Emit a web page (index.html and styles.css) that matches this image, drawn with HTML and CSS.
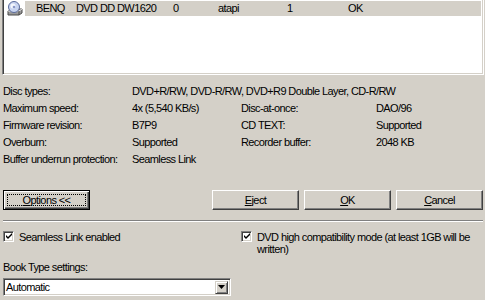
FILE: index.html
```html
<!DOCTYPE html>
<html>
<head>
<meta charset="utf-8">
<link rel="stylesheet" href="styles.css">
</head>
<body>
<div class="dialog">
  <div class="list">
    <div class="row">
      <svg class="drive" width="16" height="16" viewBox="0 0 16 16">
        <path d="M1 10 L4 8 H15 V12 L12 14 H1 Z" fill="#9a9a9a" stroke="#4a4a4a" stroke-width="1"/>
        <path d="M1 10 H12 L15 8" fill="none" stroke="#e8e8e8" stroke-width="1"/>
        <path d="M12 10 V14" stroke="#4a4a4a" stroke-width="1"/>
        <circle cx="7" cy="6" r="5.5" fill="#c8d4f0" stroke="#5a6a9a" stroke-width="1"/>
        <circle cx="6" cy="5" r="2.5" fill="#ffffff" opacity="0.8"/>
        <circle cx="7" cy="6" r="1.3" fill="#8a98c8"/>
      </svg>
      <div class="cells">
        <span>BENQ</span>
        <span>DVD DD DW1620</span>
        <span>0</span>
        <span>atapi</span>
        <span>1</span>
        <span>OK</span>
      </div>
    </div>
  </div>

  <div class="info">
    <span>Disc types:</span>
    <span class="wide">DVD+R/RW, DVD-R/RW, DVD+R9 Double Layer, CD-R/RW</span>
    <span>Maximum speed:</span>
    <span>4x (5,540 KB/s)</span>
    <span>Disc-at-once:</span>
    <span>DAO/96</span>
    <span>Firmware revision:</span>
    <span>B7P9</span>
    <span>CD TEXT:</span>
    <span>Supported</span>
    <span>Overburn:</span>
    <span>Supported</span>
    <span>Recorder buffer:</span>
    <span>2048 KB</span>
    <span>Buffer underrun protection:</span>
    <span class="wide">Seamless Link</span>
  </div>

  <div class="buttons">
    <button class="btn default"><span class="focus"><u>O</u>ptions &lt;&lt;</span></button>
    <div class="right-buttons">
      <button class="btn"><u>E</u>ject</button>
      <button class="btn"><u>O</u>K</button>
      <button class="btn"><u>C</u>ancel</button>
    </div>
  </div>

  <div class="separator"></div>

  <div class="options">
    <div class="col">
      <label class="check">
        <span class="box"><svg width="7" height="7" viewBox="0 0 7 7"><path d="M0 2 L2 4 L6 0 V2 L2 6 L0 4 Z" fill="#000"/></svg></span>
        <span class="label">Seamless Link enabled</span>
      </label>
      <div class="book-label">Book Type settings:</div>
      <div class="select">
        <span class="value">Automatic</span>
        <span class="arrow"><svg width="7" height="4" viewBox="0 0 7 4"><path d="M0 0 H7 L3.5 4 Z" fill="#000"/></svg></span>
      </div>
    </div>
    <div class="col">
      <label class="check">
        <span class="box"><svg width="7" height="7" viewBox="0 0 7 7"><path d="M0 2 L2 4 L6 0 V2 L2 6 L0 4 Z" fill="#000"/></svg></span>
        <span class="label">DVD high compatibility mode (at least 1GB will be written)</span>
      </label>
    </div>
  </div>
</div>
</body>
</html>
```

FILE: styles.css
```css
html, body {
  margin: 0;
  padding: 0;
  background: #d4d0c8;
}
body {
  width: 485px;
  height: 300px;
  overflow: hidden;
  font-family: "Liberation Sans", Arial, sans-serif;
  font-size: 11px;
  letter-spacing: -0.6px;
  color: #000;
}
.dialog {
  display: flex;
  flex-direction: column;
}
.list {
  margin: -2px 1px 0 2px;
  height: 73px;
  background: #fff;
  border-style: solid;
  border-width: 1px;
  border-color: #808080 #fff #fff #808080;
  box-shadow: inset 1px 1px 0 #404040, inset -1px -1px 0 #d4d0c8;
  padding: 2px 2px 0 2px;
}
.row {
  display: flex;
  align-items: center;
  height: 15px;
}
.drive {
  margin-left: 2px;
  flex: none;
}
.cells {
  flex: 1;
  height: 15px;
  margin-left: 2px;
  background: #d4d0c8;
  display: grid;
  grid-template-columns: 40px 97px 45px 69px 61px 1fr;
  align-items: center;
  padding-left: 11px;
  line-height: 15px;
}
.info {
  margin-top: 7px;
  padding-left: 3px;
  display: grid;
  grid-template-columns: 129px 109px 135px 1fr;
  grid-auto-rows: 17px;
  align-items: center;
}
.info .wide {
  grid-column: span 3;
}
.buttons {
  margin-top: 23px;
  display: flex;
  justify-content: space-between;
  padding: 0 2px 0 3px;
}
.right-buttons {
  display: flex;
  gap: 5px;
}
.btn {
  width: 87px;
  height: 20px;
  padding: 0;
  margin: 0;
  font: inherit;
  letter-spacing: inherit;
  color: #000;
  background: #d4d0c8;
  border-style: solid;
  border-width: 1px;
  border-color: #fff #404040 #404040 #fff;
  box-shadow: inset -1px -1px 0 #808080;
  display: flex;
  align-items: center;
  justify-content: center;
}
.btn.default {
  border: 1px solid #000;
  box-shadow: inset 1px 1px 0 #fff, inset -1px -1px 0 #404040, inset -2px -2px 0 #808080;
}
.btn .focus {
  flex: 1;
  align-self: stretch;
  margin: 3px;
  border: 1px dotted #000;
  display: flex;
  align-items: center;
  justify-content: center;
}
.separator {
  margin: 10px 2px 0 3px;
  border-top: 1px solid #808080;
  border-bottom: 1px solid #fff;
  height: 0;
}
.options {
  margin-top: 9px;
  padding-left: 3px;
  display: grid;
  grid-template-columns: 238px 1fr;
}
.col {
  display: flex;
  flex-direction: column;
}
.check {
  display: flex;
  align-items: flex-start;
  line-height: 12px;
}
.box {
  flex: none;
  width: 9px;
  height: 9px;
  background: #fff;
  border-style: solid;
  border-width: 1px;
  border-color: #808080 #fff #fff #808080;
  box-shadow: inset 1px 1px 0 #404040, inset -1px -1px 0 #d4d0c8;
  display: flex;
  align-items: center;
  justify-content: center;
}
.box svg {
  margin-left: 1px;
}
.check .label {
  margin-left: 5px;
  padding-right: 10px;
}
.book-label {
  margin-top: 17px;
  line-height: 14px;
}
.select {
  margin-top: 4px;
  width: 222px;
  height: 14px;
  background: #fff;
  border-style: solid;
  border-width: 1px;
  border-color: #808080 #fff #fff #808080;
  box-shadow: inset 1px 1px 0 #404040, inset -1px -1px 0 #d4d0c8;
  display: flex;
  align-items: center;
  justify-content: space-between;
  padding: 1px 2px 1px 2px;
}
.select .value {
  line-height: 14px;
}
.arrow {
  width: 13px;
  height: 13px;
  box-sizing: border-box;
  background: #d4d0c8;
  border-style: solid;
  border-width: 1px;
  border-color: #d4d0c8 #404040 #404040 #d4d0c8;
  box-shadow: inset 1px 1px 0 #fff, inset -1px -1px 0 #808080;
  display: flex;
  align-items: center;
  justify-content: center;
}
```
